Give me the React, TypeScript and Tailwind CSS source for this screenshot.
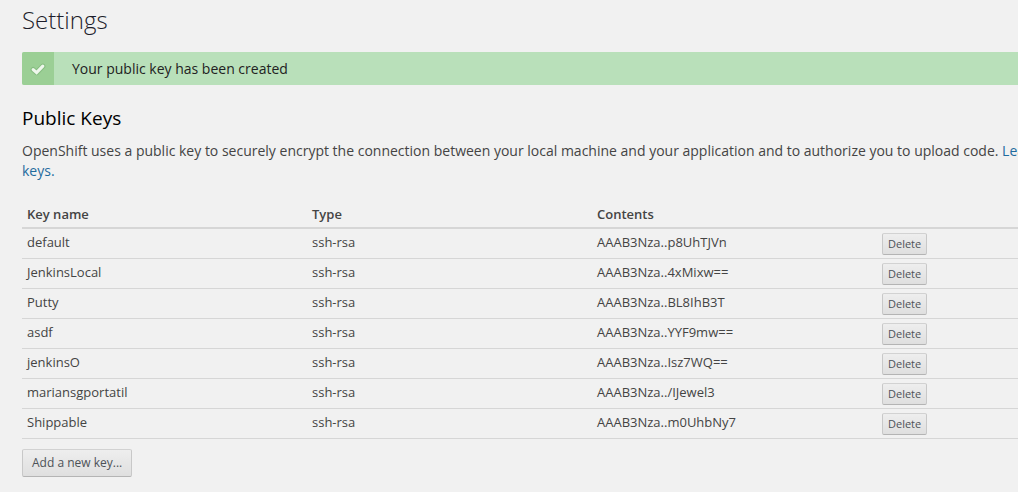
const keys = [
  { name: "default", type: "ssh-rsa", contents: "AAAB3Nza..p8UhTJVn" },
  { name: "JenkinsLocal", type: "ssh-rsa", contents: "AAAB3Nza..4xMixw==" },
  { name: "Putty", type: "ssh-rsa", contents: "AAAB3Nza..BL8IhB3T" },
  { name: "asdf", type: "ssh-rsa", contents: "AAAB3Nza..YYF9mw==" },
  { name: "jenkinsO", type: "ssh-rsa", contents: "AAAB3Nza..Isz7WQ==" },
  { name: "mariansgportatil", type: "ssh-rsa", contents: "AAAB3Nza../IJewel3" },
  { name: "Shippable", type: "ssh-rsa", contents: "AAAB3Nza..m0UhbNy7" },
];

const buttonLook =
  "block rounded-[2px] border border-[#c8c8c8] border-t-[#d2d2d2] border-b-[#b4b4b4] bg-linear-to-b from-[#eeeeee] to-[#dfdfdf] text-[#4d5258]";

function SuccessAlert({ message }: { message: string }) {
  return (
    <div role="status" className="flex overflow-hidden rounded-[2px] bg-[#b9e0ba]">
      <div className="flex w-8 items-center justify-center bg-[#9bcf95]">
        <svg viewBox="0 0 16 14" className="h-3.5 w-4" fill="none" aria-hidden="true">
          <path
            d="M3.2 7.6 6.6 10.6 12.8 4.2"
            stroke="#86bd81"
            strokeWidth="5.2"
            strokeLinejoin="round"
            strokeLinecap="round"
          />
          <path
            d="M3.2 7.6 6.6 10.6 12.8 4.2"
            stroke="#eef7ec"
            strokeWidth="3.2"
            strokeLinejoin="miter"
            strokeLinecap="round"
          />
        </svg>
      </div>
      <p className="py-[6px] pl-[18px] text-sm leading-[21px] text-[#222222]">{message}</p>
    </div>
  );
}

function KeyTable() {
  return (
    <table className="w-full table-fixed border-collapse text-left text-[13px] leading-5 text-[#444444]">
      <thead>
        <tr className="border-b-2 border-[#d6d6d6]">
          <th className="px-[5px] pt-1 pb-[3px] font-semibold">Key name</th>
          <th className="px-[5px] pt-1 pb-[3px] font-semibold">Type</th>
          <th className="px-[5px] pt-1 pb-[3px] font-semibold">Contents</th>
          <td />
        </tr>
      </thead>
      <tbody>
        {keys.map((key) => (
          <tr key={key.name} className="border-b border-[#d6d6d6] align-top">
            <td className="px-[5px] pt-[3px]">{key.name}</td>
            <td className="px-[5px] pt-[3px]">{key.type}</td>
            <td className="px-[5px] pt-[3px]">{key.contents}</td>
            <td className="px-[5px] pt-1 pb-[3px]">
              <button
                type="button"
                aria-label={`Delete ${key.name}`}
                className={`${buttonLook} px-[5px] text-[11px] leading-5`}
              >
                Delete
              </button>
            </td>
          </tr>
        ))}
      </tbody>
    </table>
  );
}

export default function App() {
  return (
    <div className="min-h-screen overflow-hidden bg-[#f1f1f1] pl-[22px] font-['Open_Sans',sans-serif]">
      <main className="min-w-[1140px] pt-1 pb-4">
        <h1 className="mb-4 text-2xl leading-8 font-light text-[#1d1d2b]">Settings</h1>
        <SuccessAlert message="Your public key has been created" />
        <h2 className="mt-5 text-[19px] leading-[26px] text-black">Public Keys</h2>
        <p className="mt-[10px] mb-[19px] text-sm leading-5 text-[#444444]">
          OpenShift uses a public key to securely encrypt the connection between your local machine
          and your application and to authorize you to upload code.{" "}
          <a href="#ssh-keys" className="text-[#1f6b9e]">
            Learn more about SSH keys.
          </a>
        </p>
        <KeyTable />
        <button type="button" className={`${buttonLook} mt-[10px] px-[9px] text-xs leading-[26px]`}>
          Add a new key...
        </button>
      </main>
    </div>
  );
}
